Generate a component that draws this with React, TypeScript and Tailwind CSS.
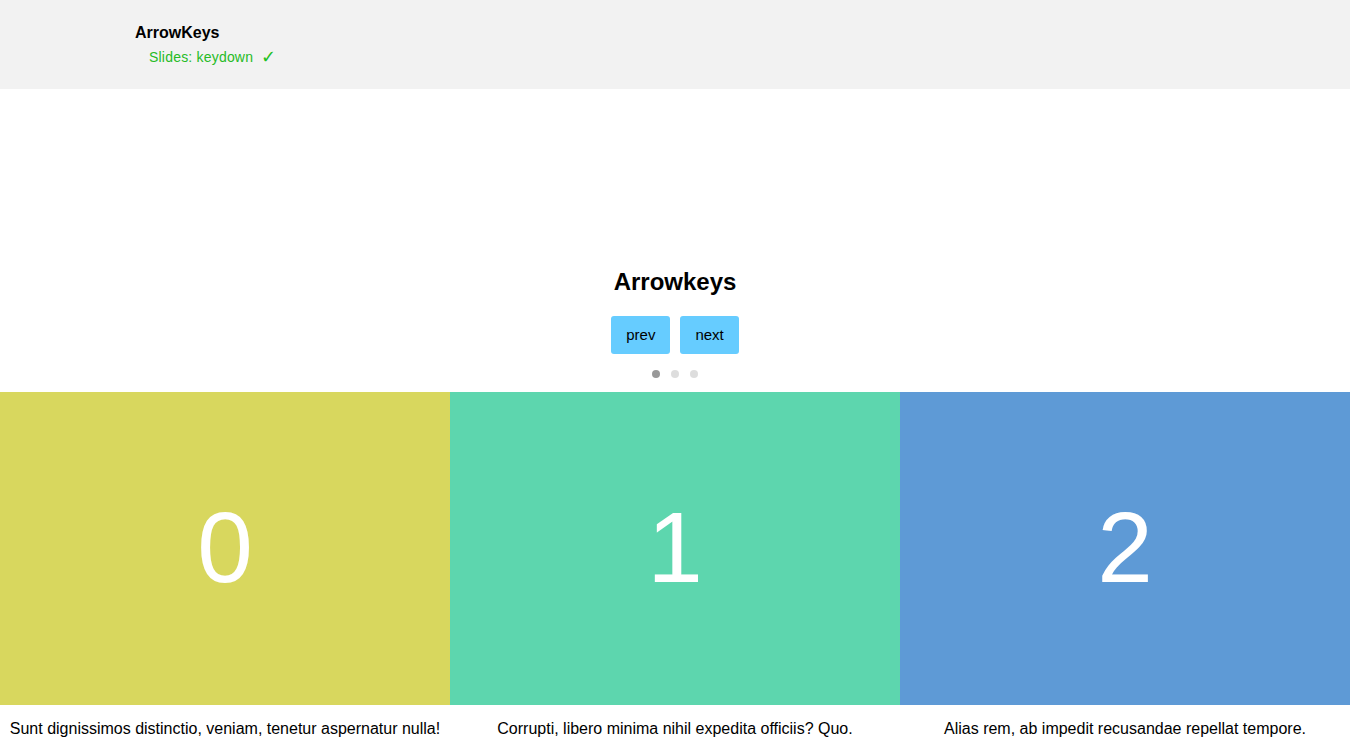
import React from "react";

const slides = [
  { n: "0", bg: "bg-[#d8d75e]", text: "Sunt dignissimos distinctio, veniam, tenetur aspernatur nulla!" },
  { n: "1", bg: "bg-[#5dd6ae]", text: "Corrupti, libero minima nihil expedita officiis? Quo." },
  { n: "2", bg: "bg-[#5e9ad6]", text: "Alias rem, ab impedit recusandae repellat tempore." },
];

export default function App() {
  return (
    <div className="w-[1350px] h-[753px] overflow-hidden bg-white text-black font-['Liberation_Sans',Arial,sans-serif]">
      <div className="h-[89px] bg-[#f2f2f2] pl-[135px] pt-[24px]">
        <div className="text-[16px] leading-[18px] font-bold">ArrowKeys</div>
        <div className="mt-[7px] pl-[14px] text-[14px] leading-[16px] text-[#26bb26] flex items-center">
          <span className="tracking-[0.2px]">Slides: keydown</span>
          <span className="ml-[8px] text-[18px] leading-[16px] text-[#22c022]">✓</span>
        </div>
      </div>
      <div className="h-[303px] flex flex-col items-center justify-end pb-[14px]">
        <div className="text-[24px] leading-[28px] font-bold">Arrowkeys</div>
        <div className="mt-[20px] flex gap-[10px]">
          <button className="h-[38px] px-[15px] rounded-[3px] bg-[#66ccff] text-[15px] text-black">prev</button>
          <button className="h-[38px] px-[15px] rounded-[3px] bg-[#66ccff] text-[15px] text-black">next</button>
        </div>
        <div className="mt-[16px] flex gap-[11px]">
          <span className="w-[8px] h-[8px] rounded-full bg-[#999999]" />
          <span className="w-[8px] h-[8px] rounded-full bg-[#dddddd]" />
          <span className="w-[8px] h-[8px] rounded-full bg-[#dddddd]" />
        </div>
      </div>
      <div className="flex">
        {slides.map((s) => (
          <div key={s.n} className="w-[450px] flex flex-col">
            <div className={`h-[313px] ${s.bg} flex items-center justify-center pb-[3px] text-white text-[100px] leading-none`}>
              {s.n}
            </div>
            <div className="mt-[15px] text-center text-[16px] leading-[18px]">{s.text}</div>
          </div>
        ))}
      </div>
    </div>
  );
}
